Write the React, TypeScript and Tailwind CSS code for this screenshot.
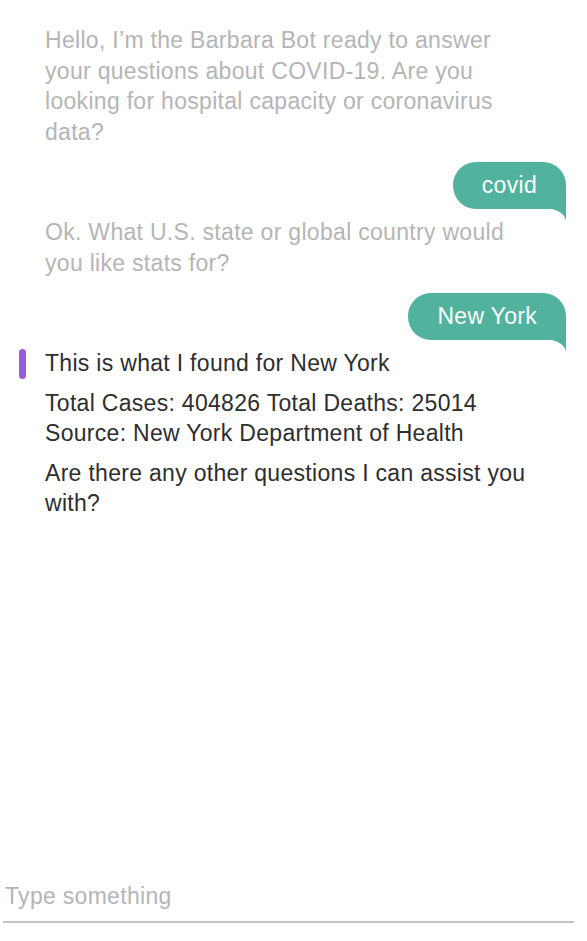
import React from "react";

const font = { fontFamily: '"Liberation Sans", Arial, Helvetica, sans-serif' };

function UserBubble({ text }: { text: string }) {
  return (
    <div className="flex justify-end pr-[21px]">
      <div className="relative rounded-[23px] rounded-br-none bg-[#51b29d] px-[29px] h-[47px] flex items-center text-[23px] tracking-[0.3px] text-white">
        {text}
        <svg
          className="absolute right-0 top-full"
          width="14"
          height="11"
          viewBox="0 0 14 11"
          aria-hidden
        >
          <path d="M0 0 H14 V11 Q12 3 0 0 Z" fill="#51b29d" />
        </svg>
      </div>
    </div>
  );
}

function BotMessage({ children, faded }: { children: React.ReactNode; faded?: boolean }) {
  return (
    <div
      className={[
        "pl-[45px] pr-[47px] text-[23px] leading-[30.5px] tracking-[0.3px]",
        faded ? "text-[#b5b5b5]" : "text-[#2e2e2e]",
      ].join(" ")}
    >
      {children}
    </div>
  );
}

export default function App() {
  return (
    <div className="flex h-[941px] w-full flex-col bg-white" style={font}>
      <div className="flex-1 overflow-hidden pt-[25px]">
        <BotMessage faded>
          Hello, I’m the Barbara Bot ready to answer your questions about COVID-19. Are you looking for
          hospital capacity or coronavirus data?
        </BotMessage>

        <div className="mt-[15px]">
          <UserBubble text="covid" />
        </div>

        <div className="mt-[8px]">
          <BotMessage faded>Ok. What U.S. state or global country would you like stats for?</BotMessage>
        </div>

        <div className="mt-[15px]">
          <UserBubble text="New York" />
        </div>

        <div className="relative mt-[8px]">
          <span className="absolute left-[19px] top-[1px] h-[30px] w-[7px] rounded-full bg-[#9a5cd6]" />
          <BotMessage>
            <p>This is what I found for New York</p>
            <p className="mt-[9px]">
              Total Cases: 404826 Total Deaths: 25014
              <br />
              Source: New York Department of Health
            </p>
            <p className="mt-[9px]">Are there any other questions I can assist you with?</p>
          </BotMessage>
        </div>
      </div>

      <div className="px-[3px] pb-[18px]">
        <input
          type="text"
          placeholder="Type something"
          className="w-[571px] border-b-2 border-[#c4c4c4] bg-transparent pb-[8px] pl-[2px] text-[23px] tracking-[0.3px] text-[#2e2e2e] outline-none placeholder:text-[#b5b5b5]"
        />
      </div>
    </div>
  );
}
